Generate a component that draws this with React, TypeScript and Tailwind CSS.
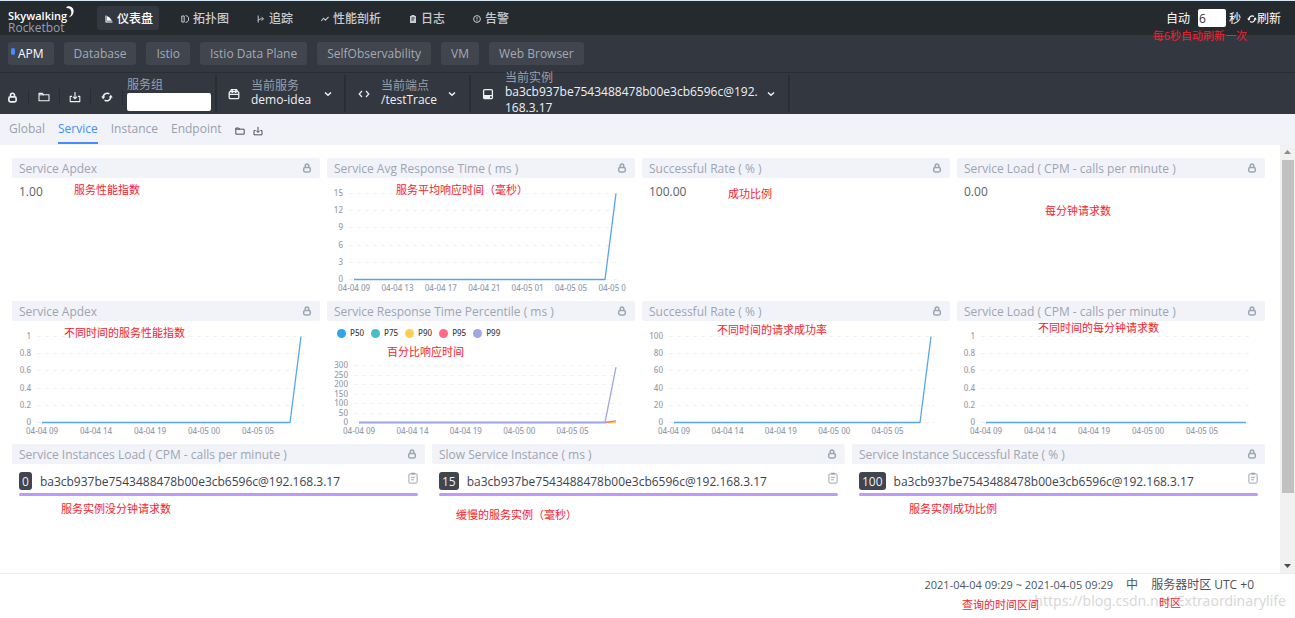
import React from "react";

type IconProps = { className?: string };

function Lock({ className = "" }: IconProps) {
  return (
    <svg viewBox="0 0 10 10" className={className} fill="none" stroke="currentColor" strokeWidth="1.5" aria-hidden="true">
      <rect x="1.7" y="4.4" width="6.6" height="4.6" rx="1.4" />
      <path d="M3.2 4.2V2.9a1.8 1.8 0 0 1 3.6 0v1.3" />
    </svg>
  );
}

function Folder({ className = "" }: IconProps) {
  return (
    <svg viewBox="0 0 12 10" className={className} fill="none" stroke="currentColor" strokeWidth="1.1" aria-hidden="true">
      <path d="M1 8.8V1.4h3.4l1.2 1.4H11v6z" strokeLinejoin="round" />
      <path d="M1 2.8h5" />
    </svg>
  );
}

function Download({ className = "" }: IconProps) {
  return (
    <svg viewBox="0 0 12 12" className={className} fill="none" stroke="currentColor" strokeWidth="1.1" aria-hidden="true">
      <path d="M3 5.4H1.2v5.2h9.6V5.4H9" strokeLinejoin="round" />
      <path d="M6 1v6.4M3.9 5.6 6 7.8l2.1-2.2" />
    </svg>
  );
}

function Refresh({ className = "" }: IconProps) {
  return (
    <svg viewBox="0 0 12 12" className={className} aria-hidden="true">
      <path
        d="M2.4 7A3.9 3.9 0 0 1 8.4 2.9M9.6 5A3.9 3.9 0 0 1 3.6 9.1"
        fill="none"
        stroke="currentColor"
        strokeWidth="1.5"
      />
      <path d="M0.2 5.4h4L2.2 8.2zM7.8 6.6h4L9.8 3.8z" fill="currentColor" />
    </svg>
  );
}

function Chevron({ className = "" }: IconProps) {
  return (
    <svg viewBox="0 0 8 6" className={className} fill="none" stroke="currentColor" strokeWidth="1.5" aria-hidden="true">
      <path d="M1 1.5 4 4.3l3-2.8" />
    </svg>
  );
}

function Package({ className = "" }: IconProps) {
  return (
    <svg viewBox="0 0 12 12" className={className} fill="none" stroke="currentColor" strokeWidth="1.3" aria-hidden="true">
      <rect x="1.2" y="3.6" width="9.6" height="7" rx="1.2" />
      <path d="M2.4 3.6 3.4 1.6h5.2l1 2M1.2 6.4h9.6" />
      <path d="M4.3 2v3M7.7 2v3" />
    </svg>
  );
}

function Code({ className = "" }: IconProps) {
  return (
    <svg viewBox="0 0 12 8" className={className} fill="none" stroke="currentColor" strokeWidth="1.2" aria-hidden="true">
      <path d="M4 1 1.2 4 4 7M8 1l2.8 3L8 7" />
    </svg>
  );
}

function Disk({ className = "" }: IconProps) {
  return (
    <svg viewBox="0 0 12 12" className={className} fill="none" stroke="currentColor" strokeWidth="1.3" aria-hidden="true">
      <rect x="1.6" y="1.6" width="8.8" height="6" rx="1.2" />
      <path d="M1.6 7v2.4a1.2 1.2 0 0 0 1.2 1.200h6.400a1.200 1.200 0 0 0 1.200-1.200V7" />
      <path d="M2 7.6h6v2.400H2z" fill="currentColor" stroke="none" />
    </svg>
  );
}

function Clipboard({ className = "" }: IconProps) {
  return (
    <svg viewBox="0 0 10 12" className={className} fill="none" stroke="currentColor" aria-hidden="true">
      <rect x="0.9" y="1.9" width="8.2" height="9.2" rx="1" />
      <path d="M3.2 1.6h3.6" strokeWidth="1.8" />
      <path d="M3 5.3h4M3 7.8h3" />
    </svg>
  );
}

const navItems = [
  {
    label: "仪表盘",
    active: true,
    icon: <path d="M0.5 0.5h1v6h6v1h-7zM2 1l2.6 1.6 2.4 3.2H2z" fill="currentColor" />,
  },
  {
    label: "拓扑图",
    icon: <path d="M0.8 1h2.4v6H0.8zM4.6 0.6c2.6 0.4 3 1.6 3 3.4s-0.4 3-3 3.4" fill="none" stroke="currentColor" />,
  },
  {
    label: "追踪",
    icon: <path d="M1.2 0.5v7M1.2 5.6c1-1.6 2.4-1.8 4.4-1.8M4.6 2.2l2 1.6-2 1.6" fill="none" stroke="currentColor" />,
  },
  {
    label: "性能剖析",
    icon: <path d="M0.2 6 2.6 3.2l1.8 1.9L7.6 1.8" fill="none" stroke="currentColor" strokeWidth="1.1" />,
  },
  {
    label: "日志",
    icon: <path d="M1 1h1.4V0h3.2v1H7v7H1zM2.4 2.6v1h3.2v-1zM2.4 4.6v1h2.4v-1z" fill="currentColor" fillRule="evenodd" />,
  },
  {
    label: "告警",
    icon: (
      <g fill="none" stroke="currentColor">
        <circle cx="4" cy="4" r="3.4" />
        <path d="M4 2v2.4M4 5.2v1" />
      </g>
    ),
  },
];

const groups = ["APM", "Database", "Istio", "Istio Data Plane", "SelfObservability", "VM", "Web Browser"];
const tabs = ["Global", "Service", "Instance", "Endpoint"];
const BLUE = "#55a6ec";

type Series = { color: string; last: number };
type ChartProps = {
  label: string;
  yLabels: string[];
  xLabels: string[];
  labelX: number;
  step: number;
  top?: number;
  endX?: number;
  series: Series[];
};

const CHART_BOTTOM = 101;

function Chart({ label, yLabels, xLabels, labelX, step, top = 15, endX = 289, series }: ChartProps) {
  const startX = labelX + 11;
  const gap = (CHART_BOTTOM - top) / (yLabels.length - 1);
  return (
    <svg
      viewBox="0 0 308 116"
      className="block w-full font-['Noto_Sans',sans-serif] font-medium"
      role="img"
      aria-label={label}
      fontSize="8"
    >
      {yLabels.map((text, i) => {
        const y = CHART_BOTTOM - gap * i;
        return (
          <g key={text}>
            <line x1={labelX + 6} x2={293} y1={Math.round(y) + 0.5} y2={Math.round(y) + 0.5} stroke="#f1f2f4" strokeDasharray="4 4" />
            <text x={labelX} y={y + 3} textAnchor="end" fill="#959dab">
              {text}
            </text>
          </g>
        );
      })}
      {xLabels.map((text, i) => (
        <g key={text + i}>
          <line x1={startX + step * i} x2={startX + step * i} y1={102} y2={105} stroke="#eeeff2" />
          <text x={startX + step * i - 16} y={113} fill="#959dab">
            {text}
          </text>
        </g>
      ))}
      {series.map((s) => (
        <polyline
          key={s.color}
          points={`${startX},101.5 ${endX - 11},101.5 ${endX},${101.5 - (101 - top) * s.last}`}
          fill="none"
          stroke={s.color}
          strokeWidth="1.3"
          strokeLinejoin="round"
        />
      ))}
    </svg>
  );
}

function Note({ className, children }: { className: string; children: React.ReactNode }) {
  return <span className={`absolute whitespace-nowrap text-[11px] leading-4 text-[#f5222d] ${className}`}>{children}</span>;
}

function Card({ title, note, noteClass, children }: { title: string; note: string; noteClass: string; children: React.ReactNode }) {
  return (
    <section className="relative min-w-0">
      <header className="flex h-5 items-center justify-between rounded-[2px] bg-[#f2f3f9] pl-[7px] pr-2 text-[#9da5b2]">
        <h2 className="whitespace-nowrap pt-[2px] text-xs">{title}</h2>
        <Lock className="size-[10px]" />
      </header>
      {children}
      <Note className={noteClass}>{note}</Note>
    </section>
  );
}

function Value({ children }: { children: React.ReactNode }) {
  return <p className="px-[7px] pt-[6px] text-xs text-[#5c606b]">{children}</p>;
}

function InstanceRow({ value }: { value: string }) {
  return (
    <div className="px-[7px] pt-2">
      <div className="flex gap-2 text-xs">
        <span className="h-[18px] rounded-[3px] bg-[#40454e] px-[3px] leading-[19px] text-[#eef0f4]">{value}</span>
        <span className="leading-[19px] text-[#3d444f]">ba3cb937be7543488478b00e3cb6596c@192.168.3.17</span>
        <button type="button" aria-label="复制" className="ml-auto h-3 text-[#9da5b2]">
          <Clipboard className="h-3 w-[10px]" />
        </button>
      </div>
      <div className="mt-[2px] h-[3px] rounded-full bg-[#bf99f8]" />
    </div>
  );
}

function Selector({ icon, label, value, className }: { icon: React.ReactNode; label: string; value: string; className: string }) {
  return (
    <button
      type="button"
      aria-haspopup="listbox"
      className={`my-[2px] flex items-center border-r-2 border-[#292d34] text-left text-xs text-[#eef0f4] ${className}`}
    >
      {icon}
      <span className="min-w-0 flex-1 pr-[6px]">
        <span className="block leading-[13px] text-[#989fab]">{label}</span>
        <span className="block break-all leading-4">{value}</span>
      </span>
      <Chevron className="h-[6px] w-2 shrink-0" />
    </button>
  );
}

const ratio = ["0", "0.2", "0.4", "0.6", "0.8", "1"];
const hours = ["04-04 09", "04-04 14", "04-04 19", "04-05 00", "04-05 05"];
const legend = [
  { name: "P50", color: "#30a4eb" },
  { name: "P75", color: "#45bfc0" },
  { name: "P90", color: "#ffcc55" },
  { name: "P95", color: "#ff6a84" },
  { name: "P99", color: "#a0a7e6" },
];

export default function App() {
  return (
    <div className="relative flex min-h-screen flex-col bg-white font-['Open_Sans','Noto_Sans_CJK_SC',sans-serif] text-xs">
      <header className="flex h-[35px] items-center border-t border-[#d5e6f5] bg-[#252a2f]">
        <a href="#home" className="relative ml-2 w-[89px] pt-[7px] text-[11px] leading-3">
          <span className="block font-semibold text-white">Skywalking</span>
          <span className="block text-xs leading-3 text-[#989fab]">Rocketbot</span>
          <svg viewBox="0 0 8 12" className="absolute left-[58px] top-[3px] h-3 w-2" fill="#fff" aria-hidden="true">
            <path d="M1.5 0.3C6 0 8 2.8 7.6 6 7.2 9.2 4.6 11.4 2.6 11.2 5 9.6 5.8 7.4 5.2 5.2 4.6 3 3 1.8 0 2z" />
          </svg>
        </a>
        <nav className="flex gap-[14px]">
          {navItems.map((item) => (
            <a
              key={item.label}
              href="#view"
              className={
                item.active
                  ? "flex h-6 items-center gap-1 rounded-[3px] bg-[#333840] pl-2 pr-[6px] pt-[2px] font-medium text-white"
                  : "flex h-6 items-center gap-1 rounded-[3px] pl-2 pr-[6px] pt-[2px] font-medium text-[#c9cbcf]"
              }
            >
              <svg viewBox="0 0 8 8" className="size-2" aria-hidden="true">
                {item.icon}
              </svg>
              {item.label}
            </a>
          ))}
        </nav>
        <div className="ml-auto flex items-center pr-[14px] text-white">
          <label htmlFor="auto" className="pt-[2px]">
            自动
          </label>
          <input id="auto" defaultValue="6" className="ml-2 mr-[3px] h-[18px] w-7 rounded-[2px] bg-white px-[1px] text-[#333]" />
          <span className="pt-[2px]">秒</span>
          <button type="button" className="ml-[6px] flex items-center pt-[2px]">
            <Refresh className="size-[10px]" />
            刷新
          </button>
        </div>
      </header>

      <div className="flex h-[38px] items-center gap-[10px] border-b border-[#292d34] bg-[#333840] px-2">
        {groups.map((name, i) => (
          <button
            key={name}
            type="button"
            className={
              i === 0
                ? "relative h-[23px] rounded-[3px] bg-[#40454e] px-[10px] pt-[1px] text-white"
                : "relative h-[23px] rounded-[3px] bg-[#40454e] px-[10px] pt-[1px] text-[#a4aab5]"
            }
          >
            {i === 0 && <span className="absolute left-[3px] top-[6px] h-[7px] w-1 rounded-full bg-[#448dfe]" />}
            {name}
          </button>
        ))}
      </div>

      <div className="flex h-[41px] bg-[#333840] text-[#eef0f4]">
        <div className="flex items-center pt-[7px]">
          <button type="button" aria-label="锁定" className="flex w-[29px] justify-center border-r border-[#292d34] py-[2px] pr-[3px]">
            <Lock className="size-[11px]" />
          </button>
          <button type="button" aria-label="导入" className="flex w-[31px] justify-center border-r border-[#292d34] py-[2px]">
            <Folder className="h-3 w-3" />
          </button>
          <button type="button" aria-label="导出" className="flex w-[31px] justify-center border-r border-[#292d34] py-[2px]">
            <Download className="size-3" />
          </button>
          <button type="button" aria-label="刷新" className="flex w-8 justify-center border-r border-[#292d34] py-[2px]">
            <Refresh className="size-3" />
          </button>
        </div>
        <div className="my-[2px] flex w-[94px] flex-col justify-center border-r-2 border-[#292d34] pl-1 pr-1 pt-[1px]">
          <label htmlFor="group" className="leading-4 text-[#989fab]">
            服务组
          </label>
          <input id="group" className="h-[18px] w-full rounded-[2px] bg-white px-1 text-[#333]" />
        </div>
        <Selector icon={<Package className="mr-[11px] size-3" />} label="当前服务" value="demo-idea" className="w-[129px] pl-[11px] pr-3" />
        <Selector icon={<Code className="mr-[11px] h-2 w-3" />} label="当前端点" value="/testTrace" className="w-[125px] pl-3 pr-[13px]" />
        <Selector
          icon={<Disk className="mr-[11px] size-3 shrink-0" />}
          label="当前实例"
          value="ba3cb937be7543488478b00e3cb6596c@192.168.3.17"
          className="w-[319px] pl-[11px] pr-[13px]"
        />
      </div>

      <nav className="flex h-[31px] items-stretch gap-[13px] bg-[#f2f3f9] pl-[9px] text-[#989fab]">
        {tabs.map((tab) => (
          <a
            key={tab}
            href="#tab"
            className={
              tab === "Service"
                ? "mb-[1px] border-b-2 border-[#448dfe] pt-[7px] text-[#448dfe]"
                : "mb-[1px] border-b-2 border-transparent pt-[7px]"
            }
          >
            {tab}
          </a>
        ))}
        <div className="flex items-center gap-2 pt-[2px] text-[#3d444f]">
          <button type="button" aria-label="导入模板">
            <Folder className="h-[10px] w-[10px]" />
          </button>
          <button type="button" aria-label="导出模板">
            <Download className="size-[10px]" />
          </button>
        </div>
      </nav>

      <div className="flex flex-1">
        <main className="flex min-w-0 flex-1 flex-col gap-[7px] pb-4 pl-3 pr-[15px] pt-[13px]">
          <div className="grid grid-cols-4 gap-[7px]">
            <Card title="Service Apdex" note="服务性能指数" noteClass="left-[62px] top-6">
              <Value>1.00</Value>
            </Card>
            <Card title="Service Avg Response Time ( ms )" note="服务平均响应时间（毫秒）" noteClass="left-[69px] top-6">
              <Chart
                label="Service Avg Response Time"
                yLabels={["0", "3", "6", "9", "12", "15"]}
                xLabels={["04-04 09", "04-04 13", "04-04 17", "04-04 21", "04-05 01", "04-05 05", "04-05 0"]}
                labelX={16}
                step={43.4}
                series={[{ color: BLUE, last: 1 }]}
              />
            </Card>
            <Card title="Successful Rate ( % )" note="成功比例" noteClass="left-[86px] top-7">
              <Value>100.00</Value>
            </Card>
            <Card title="Service Load ( CPM - calls per minute )" note="每分钟请求数" noteClass="left-[88px] top-[45px]">
              <Value>0.00</Value>
            </Card>
          </div>

          <div className="grid grid-cols-4 gap-[7px]">
            <Card title="Service Apdex" note="不同时间的服务性能指数" noteClass="left-[52px] top-6">
              <Chart label="Service Apdex" yLabels={ratio} xLabels={hours} labelX={19} step={54} series={[{ color: BLUE, last: 1 }]} />
            </Card>
            <Card title="Service Response Time Percentile ( ms )" note="百分比响应时间" noteClass="left-[60px] top-[43px]">
              <ul className="absolute left-[10px] top-[26px] flex gap-[7px] font-['Noto_Sans',sans-serif] text-[8px] font-medium leading-3 text-[#444]">
                {legend.map((item) => (
                  <li key={item.name} className="flex items-center gap-1">
                    <svg viewBox="0 0 8 8" className="size-[9px]" aria-hidden="true">
                      <circle cx="4" cy="4" r="4" fill={item.color} />
                    </svg>
                    {item.name}
                  </li>
                ))}
              </ul>
              <Chart
                label="Service Response Time Percentile"
                yLabels={["0", "50", "100", "150", "200", "250", "300"]}
                xLabels={hours}
                labelX={21}
                step={53.4}
                top={44}
                series={[
                  { color: "#ffcc55", last: 0 },
                  { color: "#ff6a84", last: 0.03 },
                  { color: "#a0a7e6", last: 0.97 },
                ]}
              />
            </Card>
            <Card title="Successful Rate ( % )" note="不同时间的请求成功率" noteClass="left-[75px] top-[21px]">
              <Chart
                label="Successful Rate"
                yLabels={["0", "20", "40", "60", "80", "100"]}
                xLabels={hours}
                labelX={21}
                step={53.4}
                series={[{ color: BLUE, last: 1 }]}
              />
            </Card>
            <Card title="Service Load ( CPM - calls per minute )" note="不同时间的每分钟请求数" noteClass="left-[81px] top-[19px]">
              <Chart label="Service Load" yLabels={ratio} xLabels={hours} labelX={18} step={54} series={[{ color: BLUE, last: 0 }]} />
            </Card>
          </div>

          <div className="grid grid-cols-3 gap-[7px]">
            <Card title="Service Instances Load ( CPM - calls per minute )" note="服务实例没分钟请求数" noteClass="left-[49px] top-[57px]">
              <InstanceRow value="0" />
            </Card>
            <Card title="Slow Service Instance ( ms )" note="缓慢的服务实例（毫秒）" noteClass="left-[24px] top-[63px]">
              <InstanceRow value="15" />
            </Card>
            <Card title="Service Instance Successful Rate ( % )" note="服务实例成功比例" noteClass="left-[57px] top-[57px]">
              <InstanceRow value="100" />
            </Card>
          </div>
        </main>
        <div className="flex w-[15px] flex-col items-center bg-[#f1f1f1]" aria-hidden="true">
          <svg viewBox="0 0 15 15" className="size-[15px] shrink-0" fill="#8b8b8b">
            <path d="M4 9h7L7.5 5z" />
          </svg>
          <div className="w-3 flex-[333] bg-[#c1c1c1]" />
          <div className="flex-[65]" />
          <svg viewBox="0 0 15 15" className="size-[15px] shrink-0" fill="#4d4d4d">
            <path d="M4 6h7l-3.5 4z" />
          </svg>
        </div>
      </div>

      <footer className="relative flex h-[45px] items-start justify-end gap-[13px] border-t border-[#eaecef] pr-[41px] pt-[3px] text-[#4d5461]">
        <span className="text-[11px] leading-4">2021-04-04 09:29 ~ 2021-04-05 09:29</span>
        <button type="button">中</button>
        <span>服务器时区 UTC +0</span>
        <span className="absolute right-[9px] top-[17px] font-['Noto_Sans',sans-serif] text-sm text-[#d8d8d8]">
          https://blog.csdn.net/Extraordinarylife
        </span>
        <Note className="right-[256px] top-[23px]">查询的时间区间</Note>
        <Note className="right-[114px] top-[21px]">时区</Note>
      </footer>
      <Note className="right-[48px] top-7">每6秒自动刷新一次</Note>
    </div>
  );
}
